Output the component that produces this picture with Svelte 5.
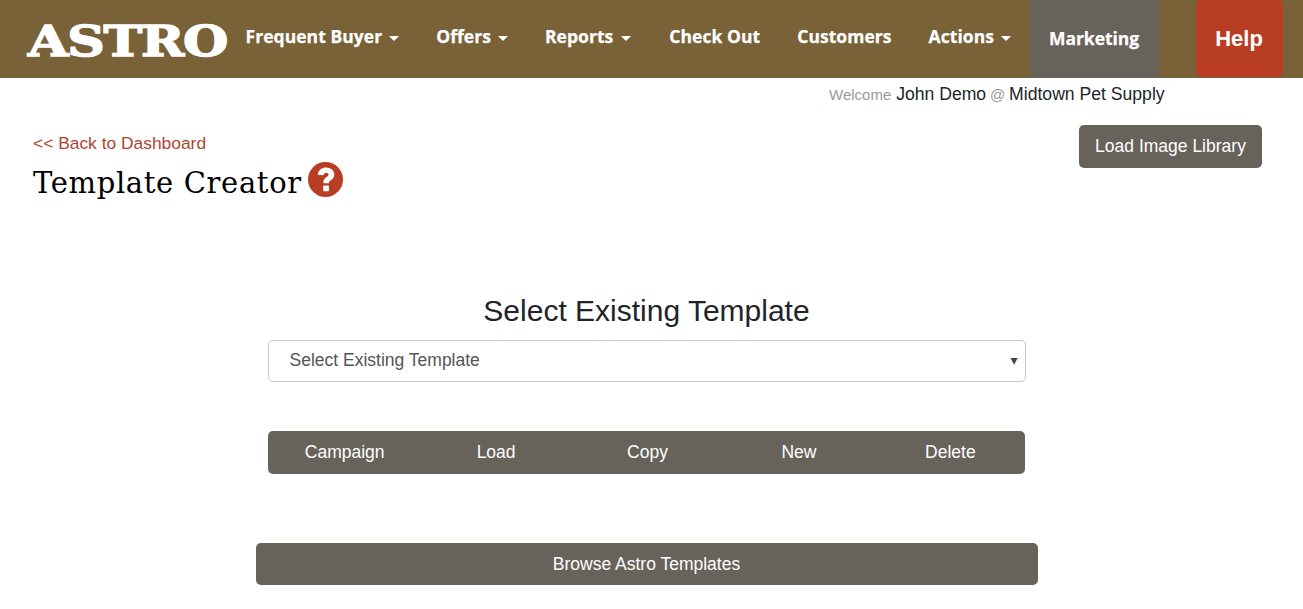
<script>
  const nav = [
    { label: 'Frequent Buyer', caret: true },
    { label: 'Offers', caret: true },
    { label: 'Reports', caret: true },
    { label: 'Check Out' },
    { label: 'Customers' },
    { label: 'Actions', caret: true }
  ];
  const actions = ['Campaign', 'Load', 'Copy', 'New', 'Delete'];
</script>

<header class="topbar">
  <div class="logo"><span class="logo-text">ASTRO</span></div>
  <nav class="nav">
    {#each nav as item}
      <a class="nav-item" href="#top">{item.label}{#if item.caret}<span class="caret"></span>{/if}</a>
    {/each}
    <a class="marketing" href="#top">Marketing</a>
  </nav>
  <a class="help" href="#top">Help</a>
</header>

<div class="welcome"><span class="muted">Welcome</span> John Demo <span class="muted at">@</span> Midtown Pet Supply</div>

<main class="page">
  <div class="head">
    <div>
      <a class="back" href="#top">&lt;&lt; Back to Dashboard</a>
      <div class="title-row">
        <h1>Template Creator</h1>
        <svg class="q" viewBox="0 0 34 34" aria-hidden="true">
          <circle cx="17" cy="17" r="17" fill="#b93d22" />
          <path d="M9.400 12.400C10.200 7.600 13.600 5.400 17.600 5.400c4.400 0 8 2.800 8 6.800 0 3-1.700 4.300-3.400 5.500-1.400 1-1.800 1.500-1.800 2.900h-5.600c0-3.200 1-4.600 2.900-5.900 1.400-1 2.200-1.500 2.200-2.400 0-1.100-1-1.800-2.200-1.800-1.500 0-2.300.9-2.700 2.400z" fill="#fff" />
          <rect x="14.800" y="22.800" width="5.600" height="5.600" rx=".7" fill="#fff" />
        </svg>
      </div>
    </div>
    <button class="btn library">Load Image Library</button>
  </div>

  <section class="center">
    <h2>Select Existing Template</h2>
    <div class="select">Select Existing Template<span class="arrow">▾</span></div>
    <div class="actions">
      {#each actions as a}
        <button class="action">{a}</button>
      {/each}
    </div>
    <button class="btn browse">Browse Astro Templates</button>
  </section>
</main>

<style>
  :global(body) {
    margin: 0;
    background: #fff;
    font-family: "Liberation Sans", Arial, sans-serif;
    color: #212529;
  }
  .topbar {
    height: 78px;
    background: #796238;
    display: flex;
    align-items: flex-start;
    padding-left: 28px;
    box-sizing: border-box;
  }
  .logo {
    width: 199px;
    height: 78px;
    line-height: 83px;
    flex: none;
  }
  .logo-text {
    display: inline-block;
    font-family: "DejaVu Serif", serif;
    font-weight: 700;
    font-size: 43px;
    letter-spacing: -1px;
    color: #fff;
    -webkit-text-stroke: 1.400px #fff;
    white-space: nowrap;
    transform: scaleX(1.210);
    transform-origin: left center;
  }
  .nav {
    display: flex;
    height: 78px;
  }
  .nav-item {
    font-family: "Open Sans", sans-serif;
    font-weight: 700;
    font-size: 17.500px;
    letter-spacing: 0.05px;
    -webkit-text-stroke: 0.250px #fff;
    color: #fff;
    text-decoration: none;
    line-height: 73px;
    padding: 0 18.500px;
    white-space: nowrap;
  }
  .nav-item:nth-child(3) .caret {
    margin-left: 8px;
    margin-right: 1px;
  }
  .caret {
    display: inline-block;
    margin-left: 7px;
    vertical-align: 2px;
    border-top: 5px solid #fff;
    border-left: 5px solid transparent;
    border-right: 5px solid transparent;
  }
  .marketing {
    font-family: "Open Sans", sans-serif;
    font-weight: 700;
    font-size: 17.500px;
    letter-spacing: -0.05px;
    -webkit-text-stroke: 0.250px #fff;
    color: #fff;
    text-decoration: none;
    background: #67625a;
    line-height: 76px;
    height: 78px;
    width: 129px;
    text-align: center;
  }
  .help {
    margin-left: 37px;
    width: 87px;
    height: 77px;
    background: #b93d22;
    border-radius: 5px;
    color: #fff;
    font-weight: 700;
    font-size: 22px;
    line-height: 77px;
    text-align: center;
    text-decoration: none;
  }
  .welcome {
    height: 32px;
    line-height: 32px;
    padding-left: 829px;
    font-size: 17.600px;
    white-space: nowrap;
  }
  .muted {
    color: #999;
    font-size: 15px;
  }
  .at {
    margin: 0 -1px;
  }
  .page {
    padding: 15px 41px 0 33px;
  }
  .head {
    display: flex;
    justify-content: space-between;
    align-items: flex-start;
    height: 168px;
  }
  .back {
    display: block;
    margin-top: 8px;
    color: #b0452f;
    font-size: 17.400px;
    line-height: 21px;
    text-decoration: none;
  }
  .title-row {
    display: flex;
    align-items: flex-start;
    gap: 6px;
    margin-top: 9px;
  }
  h1 {
    margin: 0;
    font-family: "DejaVu Serif", serif;
    font-weight: 400;
    font-size: 29px;
    line-height: 40px;
    letter-spacing: 0.650px;
    color: #000;
  }
  .q {
    width: 35px;
    height: 35px;
    margin-top: -1px;
  }
  .btn, .action {
    border: 0;
    color: #fff;
    font-family: "Liberation Sans", Arial, sans-serif;
    font-size: 17.500px;
  }
  .btn {
    border-radius: 5px;
    background: #67625a;
  }
  .library {
    width: 183px;
    height: 43px;
    padding: 0;
  }
  .center {
    display: flex;
    flex-direction: column;
    align-items: center;
    margin-left: -33px;
    margin-right: -31px;
  }
  h2 {
    margin: 0;
    font-weight: 400;
    font-size: 30px;
    line-height: 36px;
    color: #212529;
  }
  .select {
    box-sizing: border-box;
    width: 758px;
    height: 42px;
    margin-top: 11px;
    border: 1px solid #c8c8c8;
    border-radius: 5px;
    padding-left: 21px;
    line-height: 39px;
    font-size: 17.500px;
    color: #555;
    position: relative;
  }
  .arrow {
    position: absolute;
    right: 7px;
    top: 0;
    font-size: 14px;
    color: #444;
    font-family: "DejaVu Sans", sans-serif;
  }
  .actions {
    width: 757px;
    height: 43px;
    margin-top: 49px;
    background: #67625a;
    border-radius: 5px;
    display: flex;
  }
  .action {
    flex: 1;
    padding: 0 0 0 2px;
    background: transparent;
  }
  .browse {
    width: 782px;
    height: 42px;
    margin-top: 69px;
    padding: 0;
  }
</style>
